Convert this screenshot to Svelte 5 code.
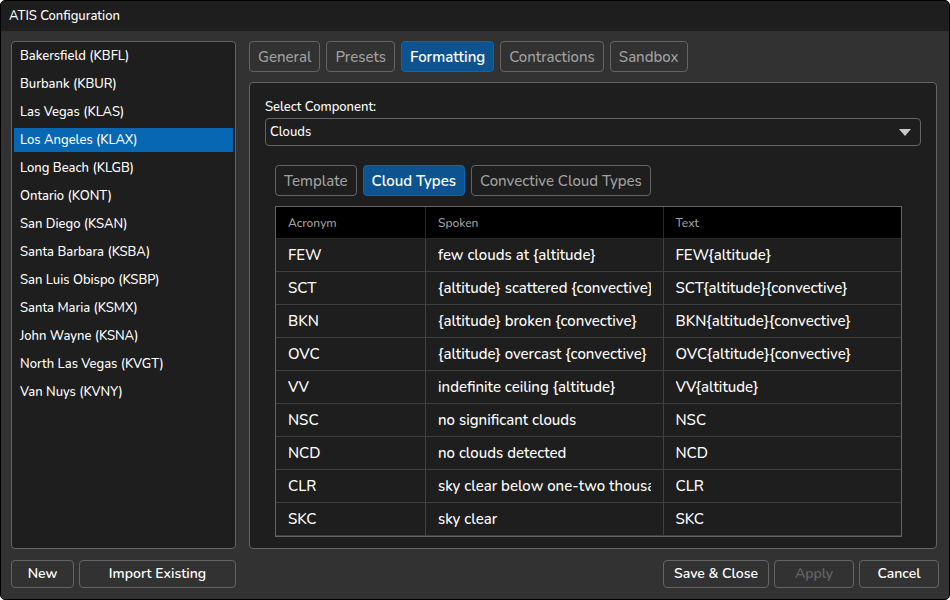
<script>
  const stations = [
    'Bakersfield (KBFL)',
    'Burbank (KBUR)',
    'Las Vegas (KLAS)',
    'Los Angeles (KLAX)',
    'Long Beach (KLGB)',
    'Ontario (KONT)',
    'San Diego (KSAN)',
    'Santa Barbara (KSBA)',
    'San Luis Obispo (KSBP)',
    'Santa Maria (KSMX)',
    'John Wayne (KSNA)',
    'North Las Vegas (KVGT)',
    'Van Nuys (KVNY)'
  ];
  const tabs = ['General', 'Presets', 'Formatting', 'Contractions', 'Sandbox'];
  const subTabs = ['Template', 'Cloud Types', 'Convective Cloud Types'];
  const rows = [
    ['FEW', 'few clouds at {altitude}', 'FEW{altitude}'],
    ['SCT', '{altitude} scattered {convective}', 'SCT{altitude}{convective}'],
    ['BKN', '{altitude} broken {convective}', 'BKN{altitude}{convective}'],
    ['OVC', '{altitude} overcast {convective}', 'OVC{altitude}{convective}'],
    ['VV', 'indefinite ceiling {altitude}', 'VV{altitude}'],
    ['NSC', 'no significant clouds', 'NSC'],
    ['NCD', 'no clouds detected', 'NCD'],
    ['CLR', 'sky clear below one-two thousand', 'CLR'],
    ['SKC', 'sky clear', 'SKC']
  ];

  let station = $state('Los Angeles (KLAX)');
  let tab = $state('Formatting');
  let subTab = $state('Cloud Types');
  let component = $state('Clouds');
</script>

<div class="window">
  <header>ATIS Configuration</header>
  <div class="body">
    <ul class="stations">
      {#each stations as name}
        <li>
          <button class:selected={station === name} onclick={() => (station = name)}>{name}</button>
        </li>
      {/each}
    </ul>

    <main>
      <nav class="tabs">
        {#each tabs as name}
          <button class:active={tab === name} onclick={() => (tab = name)}>{name}</button>
        {/each}
      </nav>
      <section class="panel">
        <label for="component">Select Component:</label>
        <div class="combo">
          <select id="component" bind:value={component}>
            <option>Clouds</option>
          </select>
          <svg viewBox="0 0 12 7" width="12" height="7" aria-hidden="true">
            <path d="M0 0H12L6 7Z" fill="#c8c8c8" />
          </svg>
        </div>
        <div class="inner">
          <nav class="tabs">
            {#each subTabs as name}
              <button class:active={subTab === name} onclick={() => (subTab = name)}>{name}</button>
            {/each}
          </nav>
          <table>
            <thead>
              <tr><th class="acronym">Acronym</th><th>Spoken</th><th>Text</th></tr>
            </thead>
            <tbody>
              {#each rows as row}
                <tr>
                  {#each row as cell}
                    <td><div class="cell">{cell}</div></td>
                  {/each}
                </tr>
              {/each}
            </tbody>
          </table>
        </div>
      </section>
    </main>
  </div>

  <footer>
    <div class="left">
      <button class="new">New</button>
      <button class="import">Import Existing</button>
    </div>
    <div class="right">
      <button class="save">Save &amp; Close</button>
      <button disabled>Apply</button>
      <button>Cancel</button>
    </div>
  </footer>
</div>

<style>
  :global(body) {
    background: #fff;
  }
  .window {
    box-sizing: border-box;
    min-height: 100vh;
    display: flex;
    flex-direction: column;
    border: 1px solid #000;
    border-radius: 5px;
    overflow: hidden;
    background: #323232;
    color: #fff;
    font: 500 13px/18px Nunito, Lato, sans-serif;
  }
  button,
  select {
    box-sizing: border-box;
    font: inherit;
    color: inherit;
    margin: 0;
  }
  header {
    background: #1e1e1e;
    padding: 6px 8px;
  }
  .body {
    flex: 1;
    display: grid;
    grid-template-columns: 225px 1fr;
    gap: 13px;
    padding: 10px 12px 11px 10px;
  }
  .stations {
    margin: 0;
    padding: 2px;
    list-style: none;
    background: #1e1e1e;
    border: 1px solid #646464;
    border-radius: 4px;
  }
  .stations li {
    padding-bottom: 4px;
  }
  .stations button {
    display: block;
    width: 100%;
    height: 24px;
    padding: 0 6px;
    border: 0;
    background: none;
    text-align: left;
  }
  .stations button.selected {
    background: #0767b3;
  }
  main {
    min-width: 0;
    display: flex;
    flex-direction: column;
    gap: 10px;
  }
  .tabs {
    display: flex;
    gap: 6px;
  }
  .tabs button {
    height: 31px;
    padding: 0 8px;
    border: 1px solid #646464;
    border-radius: 4px;
    background: none;
    color: #a0a0a0;
    font-size: 15px;
  }
  .tabs button.active {
    background: #0c538f;
    border-color: #0767b3;
    color: #fff;
    font-weight: 600;
  }
  .panel {
    flex: 1;
    padding: 15px 15px 11px;
    background: #1e1e1e;
    border: 1px solid #646464;
    border-radius: 4px;
  }
  label {
    display: block;
    padding-bottom: 2px;
  }
  .combo {
    display: grid;
    align-items: center;
  }
  .combo select,
  .combo svg {
    grid-area: 1 / 1;
  }
  .combo select {
    appearance: none;
    width: 100%;
    height: 28px;
    padding: 0 28px 0 4px;
    background: #1e1e1e;
    border: 1px solid #646464;
    border-radius: 4px;
  }
  .combo svg {
    justify-self: end;
    margin-right: 10px;
    pointer-events: none;
  }
  .inner {
    display: flex;
    flex-direction: column;
    gap: 10px;
    padding: 19px 19px 0 10px;
  }
  table {
    width: 100%;
    table-layout: fixed;
    border-collapse: separate;
    border-spacing: 0;
    border: 1px solid #646464;
  }
  th,
  td {
    box-sizing: border-box;
    padding: 0 12px;
    text-align: left;
    border-bottom: 1px solid #404040;
    border-right: 1px solid #404040;
  }
  th:last-child,
  td:last-child {
    border-right: 0;
  }
  th {
    height: 32px;
    background: #000;
    color: #a0a0a0;
    font-size: 12px;
    font-weight: 500;
    border-color: #282828;
  }
  th.acronym {
    width: 150px;
  }
  td {
    height: 33px;
    font-size: 15px;
  }
  .cell {
    overflow: hidden;
    white-space: nowrap;
  }
  footer {
    display: flex;
    justify-content: space-between;
    padding: 0 10px 11px;
  }
  .left,
  .right {
    display: flex;
    gap: 5px;
  }
  footer button {
    height: 28px;
    width: 80px;
    padding: 0;
    background: #323232;
    border: 1px solid #646464;
    border-radius: 4px;
    font-size: 14px;
    font-weight: 600;
  }
  footer .new {
    width: 63px;
  }
  footer .import {
    width: 157px;
  }
  footer .save {
    width: 106px;
  }
  footer button:disabled {
    color: #646464;
  }
</style>
